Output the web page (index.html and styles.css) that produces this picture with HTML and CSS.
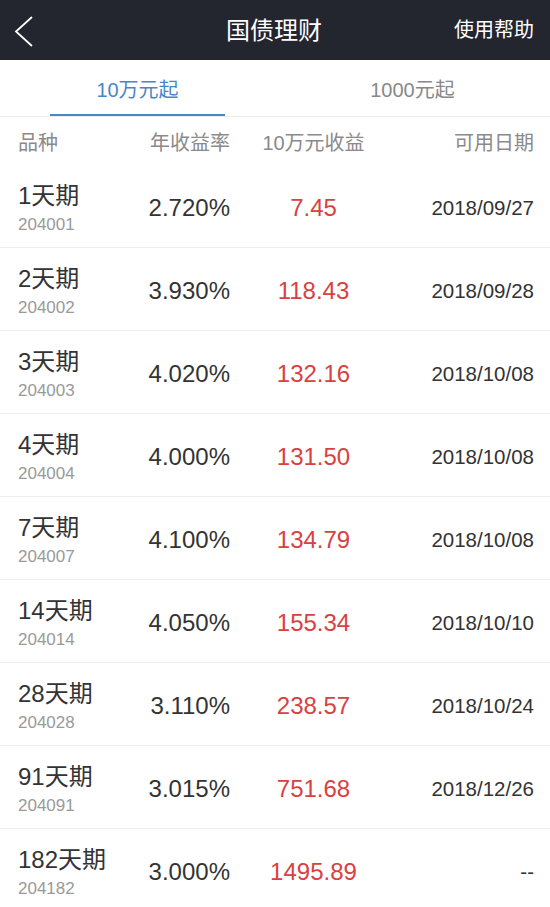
FILE: index.html
```html
<!DOCTYPE html>
<html lang="zh-CN">
<head>
<meta charset="utf-8">
<title>国债理财</title>
<link rel="stylesheet" href="styles.css">
</head>
<body>
<div class="page">
  <header class="topbar">
    <div class="back">
      <svg width="20" height="32" viewBox="0 0 20 32"><polyline points="18,2 2,16.5 18,31" fill="none" stroke="#ffffff" stroke-width="1.8"/></svg>
    </div>
    <h1 class="title">国债理财</h1>
    <div class="help">使用帮助</div>
  </header>
  <nav class="tabs">
    <div class="tab active">10万元起</div>
    <div class="tab">1000元起</div>
  </nav>
  <div class="thead">
    <div class="c-name">品种</div>
    <div class="c-rate">年收益率</div>
    <div class="c-inc">10万元收益</div>
    <div class="c-date">可用日期</div>
  </div>
  <div class="list">
    <div class="row"><div class="c-name"><div class="nm">1天期</div><div class="code">204001</div></div><div class="c-rate v">2.720%</div><div class="c-inc v red">7.45</div><div class="c-date v date">2018/09/27</div></div>
    <div class="row"><div class="c-name"><div class="nm">2天期</div><div class="code">204002</div></div><div class="c-rate v">3.930%</div><div class="c-inc v red">118.43</div><div class="c-date v date">2018/09/28</div></div>
    <div class="row"><div class="c-name"><div class="nm">3天期</div><div class="code">204003</div></div><div class="c-rate v">4.020%</div><div class="c-inc v red">132.16</div><div class="c-date v date">2018/10/08</div></div>
    <div class="row"><div class="c-name"><div class="nm">4天期</div><div class="code">204004</div></div><div class="c-rate v">4.000%</div><div class="c-inc v red">131.50</div><div class="c-date v date">2018/10/08</div></div>
    <div class="row"><div class="c-name"><div class="nm">7天期</div><div class="code">204007</div></div><div class="c-rate v">4.100%</div><div class="c-inc v red">134.79</div><div class="c-date v date">2018/10/08</div></div>
    <div class="row"><div class="c-name"><div class="nm">14天期</div><div class="code">204014</div></div><div class="c-rate v">4.050%</div><div class="c-inc v red">155.34</div><div class="c-date v date">2018/10/10</div></div>
    <div class="row"><div class="c-name"><div class="nm">28天期</div><div class="code">204028</div></div><div class="c-rate v">3.110%</div><div class="c-inc v red">238.57</div><div class="c-date v date">2018/10/24</div></div>
    <div class="row"><div class="c-name"><div class="nm">91天期</div><div class="code">204091</div></div><div class="c-rate v">3.015%</div><div class="c-inc v red">751.68</div><div class="c-date v date">2018/12/26</div></div>
    <div class="row"><div class="c-name"><div class="nm">182天期</div><div class="code">204182</div></div><div class="c-rate v">3.000%</div><div class="c-inc v red">1495.89</div><div class="c-date v date">--</div></div>
  </div>
</div>
</body>
</html>
```
FILE: styles.css
```css
html, body {
  margin: 0;
  padding: 0;
  background: #ffffff;
}
body {
  font-family: "Liberation Sans", "Noto Sans CJK SC", sans-serif;
  color: #333333;
}
.page {
  width: 550px;
  height: 907px;
  overflow: hidden;
}
.topbar {
  height: 60px;
  background: #23252f;
  display: grid;
  grid-template-columns: 1fr auto 1fr;
  align-items: center;
  padding: 0 16px 0 14px;
  color: #ffffff;
}
.back {
  display: flex;
  align-items: center;
  height: 32px;
  padding-top: 1px;
}
.back svg { display: block; }
.title {
  margin: 0;
  font-size: 24px;
  font-weight: normal;
  line-height: 30px;
  padding-top: 1px;
}
.help {
  justify-self: end;
  font-size: 20px;
  line-height: 28px;
}
.tabs {
  display: grid;
  grid-template-columns: 1fr 1fr;
  border-bottom: 1px solid #ececec;
}
.tab {
  height: 56px;
  box-sizing: border-box;
  padding-top: 19px;
  text-align: center;
  font-size: 20px;
  line-height: 22px;
  color: #888888;
  position: relative;
}
.tab.active {
  color: #4a86c4;
}
.tab.active::after {
  content: "";
  position: absolute;
  left: 50px;
  right: 50px;
  bottom: 0;
  height: 2px;
  background: #4a86c4;
}
.thead, .row {
  display: grid;
  grid-template-columns: 100px 112px 167px 1fr;
  padding: 0 16px 0 18px;
}
.thead {
  height: 48px;
  align-items: center;
  font-size: 20px;
  color: #8a8a8a;
}
.c-rate { text-align: right; }
.c-inc { text-align: center; }
.c-date { text-align: right; }
.row {
  height: 82px;
  border-bottom: 1px solid #efefef;
  align-items: center;
}
.row .c-name {
  padding-top: 6px;
}
.nm {
  font-size: 24px;
  line-height: 28px;
  color: #333333;
  white-space: nowrap;
}
.code {
  margin-top: 4px;
  font-size: 17px;
  line-height: 22px;
  color: #9a9a9a;
}
.v {
  font-size: 24px;
  line-height: 28px;
  padding-top: 4px;
  color: #333333;
}
.red { color: #d9413f; }
.date {
  font-size: 20.5px;
}
```
